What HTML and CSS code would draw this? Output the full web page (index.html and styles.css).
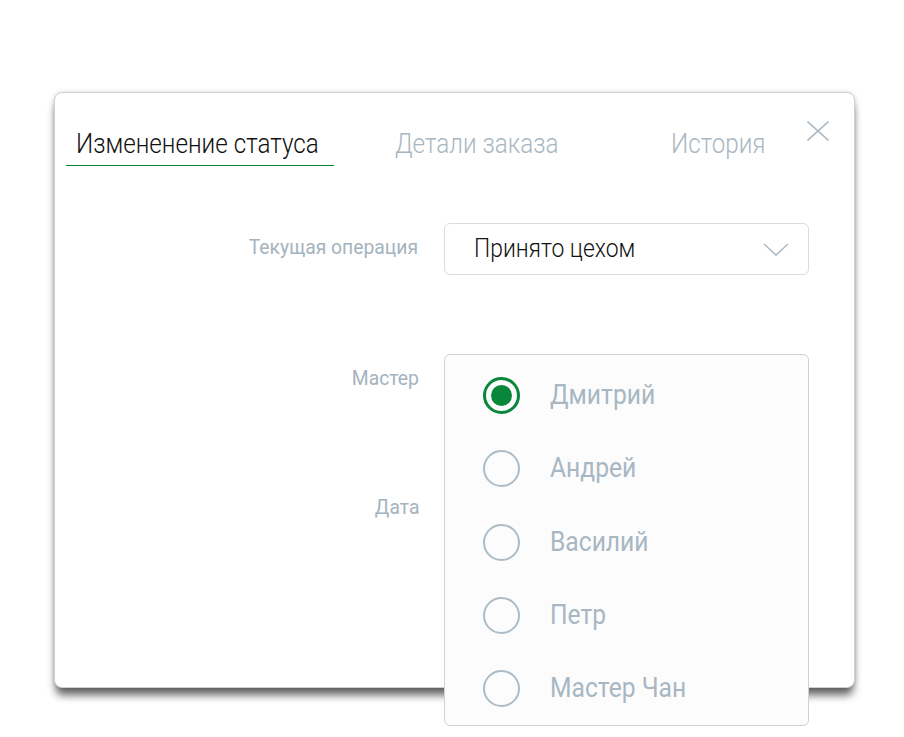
FILE: index.html
```html
<!DOCTYPE html>
<html lang="ru">
<head>
<meta charset="utf-8">
<title>Изменение статуса</title>
<link rel="stylesheet" href="styles.css">
</head>
<body>
<div class="dialog">
  <div class="tabs">
    <div class="tab tab-active"><span class="cond">Измененение статуса</span></div>
    <div class="tab tab-details"><span class="cond">Детали заказа</span></div>
    <div class="tab tab-history"><span class="cond">История</span></div>
    <button class="close" aria-label="Закрыть">
      <svg width="22" height="20" viewBox="0 0 22 20"><path d="M0.5 0.5 L21.5 19.5 M21.5 0.5 L0.5 19.5" stroke="#aebbc6" stroke-width="1.6" fill="none"/></svg>
    </button>
  </div>
  <div class="form">
    <div class="row row-op">
      <div class="label"><span class="cond-r">Текущая операция</span></div>
      <div class="select">
        <span class="select-value cond">Принято цехом</span>
        <svg class="chevron" width="26" height="13" viewBox="0 0 26 13"><path d="M1 1 L13 12 L25 1" stroke="#aebbc6" stroke-width="1.6" fill="none"/></svg>
      </div>
    </div>
    <div class="row row-master">
      <div class="labels">
        <div class="label label-master"><span class="cond-r">Мастер</span></div>
        <div class="label label-date"><span class="cond-r">Дата</span></div>
      </div>
      <div class="radio-list">
        <label class="radio-item"><span class="radio checked"></span><span class="radio-text cond">Дмитрий</span></label>
        <label class="radio-item"><span class="radio"></span><span class="radio-text cond">Андрей</span></label>
        <label class="radio-item"><span class="radio"></span><span class="radio-text cond">Василий</span></label>
        <label class="radio-item"><span class="radio"></span><span class="radio-text cond">Петр</span></label>
        <label class="radio-item"><span class="radio"></span><span class="radio-text cond">Мастер Чан</span></label>
      </div>
    </div>
  </div>
</div>
</body>
</html>
```
FILE: styles.css
```css
* { box-sizing: border-box; }
html, body { margin: 0; padding: 0; background: #fff; }
body {
  font-family: Roboto, "Noto Sans", sans-serif;
  width: 904px;
  height: 737px;
  overflow: hidden;
  padding: 92px 0 0 54px;
}
/* Roboto Condensed is not available: narrow regular Roboto instead */
.cond {
  display: inline-block;
  transform: scaleX(0.865);
  transform-origin: left center;
  white-space: nowrap;
}
.cond-r {
  display: inline-block;
  transform: scaleX(0.92);
  transform-origin: right center;
  white-space: nowrap;
}
.dialog {
  width: 801px;
  height: 596px;
  background: #fff;
  border: 1px solid #cfcfcf;
  border-radius: 8px;
  box-shadow: 0 9px 8px -2px rgba(0,0,0,0.62), 0 0 5px rgba(0,0,0,0.14);
  padding-top: 32px;
}
.tabs {
  display: flex;
  align-items: flex-start;
  padding-left: 11px;
  height: 41px;
}
.tab {
  font-size: 28px;
  font-weight: 300;
  line-height: 34px;
  padding: 2px 10px 4px;
  color: #a9b7c2;
  white-space: nowrap;
}
.tab-active {
  color: #111;
  width: 268px;
  border-bottom: 1px solid #0a8536;
}
.tab-details { margin-left: 51px; }
.tab-history { margin-left: 67px; }
.close {
  margin-left: auto;
  margin-right: 25px;
  margin-top: -4px;
  background: none;
  border: 0;
  padding: 0;
  line-height: 0;
}
.form {
  padding-top: 57px;
}
.row {
  display: flex;
  gap: 24px;
}
.label {
  width: 365px;
  text-align: right;
  font-size: 21px;
  line-height: 24px;
  color: #a5b3be;
  padding-right: 1px;
}
.row-op { align-items: center; }
.row-op .label { padding-right: 2px; margin-top: -4px; }
.select {
  width: 365px;
  height: 52px;
  border: 1px solid #dcdcdc;
  border-radius: 6px;
  display: flex;
  align-items: center;
  padding: 0 19px 0 29px;
}
.select-value {
  font-size: 26px;
  font-weight: 300;
  color: #111;
  margin-top: -2px;
  transform: scaleX(0.88);
}
.chevron { margin-top: 1px; margin-left: auto; }
.row-master { margin-top: 79px; }
.labels { width: 365px; display: flex; flex-direction: column; }
.label-master { padding-top: 12px; }
.label-date { padding-top: 105px; }
.radio-list {
  width: 365px;
  height: 372px;
  background: #fcfcfc;
  border: 1px solid #cfd2d4;
  border-radius: 6px;
  padding: 4px 0 0 38px;
  position: relative;
  z-index: 1;
}
.radio-item {
  display: flex;
  align-items: center;
  height: 73.3px;
}
.radio {
  width: 37px;
  height: 37px;
  border-radius: 50%;
  border: 2px solid #acbcc7;
  flex: none;
  display: flex;
  align-items: center;
  justify-content: center;
}
.radio.checked { border: 3px solid #08873a; }
.radio.checked::after {
  content: "";
  width: 21px;
  height: 21px;
  border-radius: 50%;
  background: #08873a;
}
.radio-text {
  margin-left: 30px;
  font-size: 28px;
  color: #a7b7c3;
  margin-top: -2px;
  transform: scaleX(0.88);
}
```
